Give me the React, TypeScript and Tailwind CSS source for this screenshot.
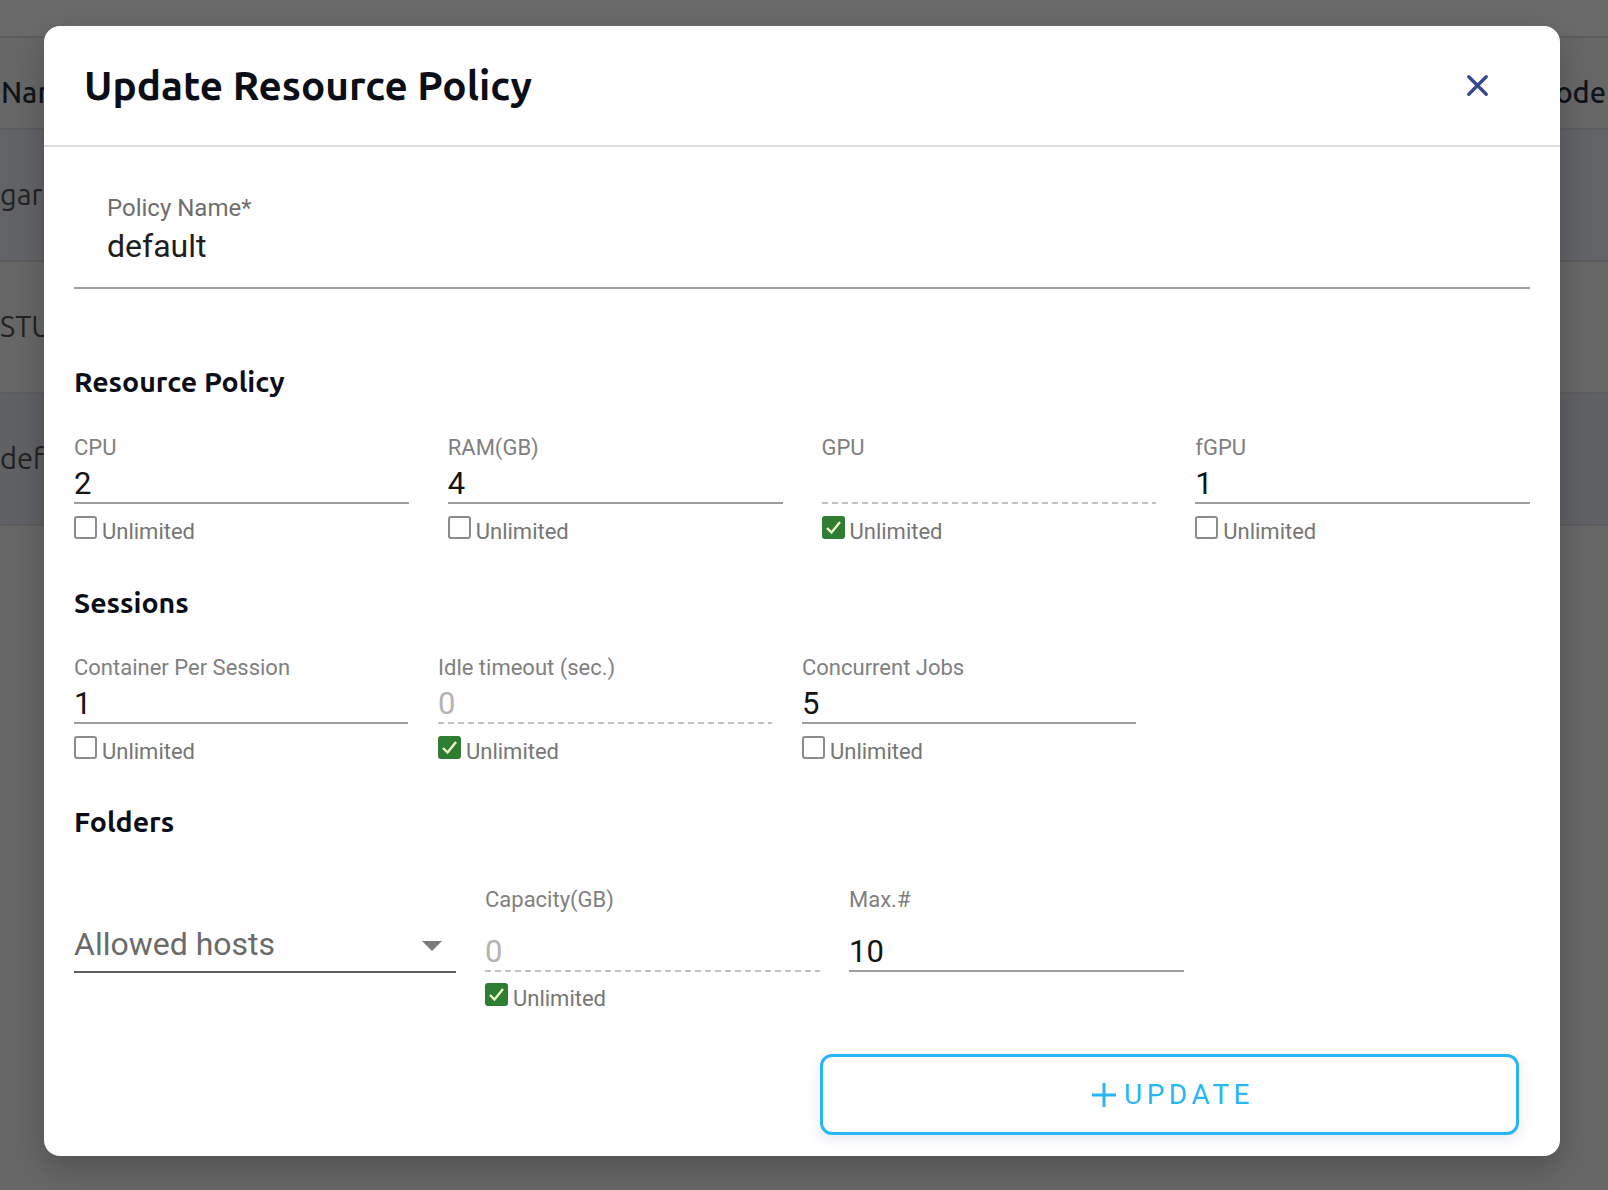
import { X } from 'lucide-react';

// ─── Fields ───────────────────────────────────────────────────────────────────

type Field = { label: string; value: string; unlimited: boolean };

const resourceFields: Field[] = [
  { label: 'CPU', value: '2', unlimited: false },
  { label: 'RAM(GB)', value: '4', unlimited: false },
  { label: 'GPU', value: '', unlimited: true },
  { label: 'fGPU', value: '1', unlimited: false },
];

const sessionFields: Field[] = [
  { label: 'Container Per Session', value: '1', unlimited: false },
  { label: 'Idle timeout (sec.)', value: '0', unlimited: true },
  { label: 'Concurrent Jobs', value: '5', unlimited: false },
];

const rows = [
  { name: 'gardener', bg: 'bg-[#626366]' },
  { name: 'STUDENT', bg: 'bg-[#676767]' },
  { name: 'default', bg: 'bg-[#606164]' },
];

export default function App() {
  return (
    <div className="relative h-[1190px] w-[1608px] overflow-hidden bg-[#676767] font-['Ubuntu','Lato',sans-serif]">
      {/* Backdrop table */}
      <div className="h-[38px] border-b-2 border-[#5d5d5d] bg-[#6a6a6a]" />
      <div className="flex h-[92px] items-center justify-between border-b-2 border-[#5d5d5d] pl-[1px] pr-[2px] pt-[19px] text-[29px] font-medium text-[#11131c]">
        <span>Name</span>
        <span>Mode</span>
      </div>
      {rows.map((r) => (
        <div
          key={r.name}
          className={`flex h-[132px] items-center border-b-2 border-[#5d5d5d] text-[29px] text-[#222] ${r.bg}`}
        >
          <span>{r.name}</span>
        </div>
      ))}

      {/* Dialog */}
      <div className="absolute left-[44px] top-[26px] flex h-[1130px] w-[1516px] flex-col rounded-[16px] bg-white shadow-[0_12px_32px_rgba(0,0,0,0.22)]">
        <header className="flex h-[121px] shrink-0 items-center justify-between border-b-2 border-[#dedede] pl-[40px] pr-[65px]">
          <h1 className="text-[40.5px] font-bold leading-none text-[#0b0d17]">Update Resource Policy</h1>
          <button aria-label="Close" className="text-[#34498f]">
            <X className="h-[35px] w-[35px]" strokeWidth={2.3} />
          </button>
        </header>

        <div className="flex flex-col px-[30px] font-['Roboto',sans-serif]">
          {/* Policy name */}
          <div className="mt-[48px] border-b-2 border-[#9e9e9e] pb-[22px] pl-[33px]">
            <div className="h-[26px] text-[24px] leading-[26px] text-[#6e6e6e]">Policy Name*</div>
            <div className="mt-[6px] h-[38px] text-[32px] leading-[38px] text-[#1e1e1e]">default</div>
          </div>

          <SectionTitle className="mt-[74px]">Resource Policy</SectionTitle>
          <div className="mt-[37px] grid grid-cols-4 gap-x-[39px]">
            {resourceFields.map((f) => (
              <NumberField key={f.label} field={f} />
            ))}
          </div>

          <SectionTitle className="mt-[44px]">Sessions</SectionTitle>
          <div className="mt-[36px] grid grid-cols-[334px_334px_334px] gap-x-[30px]">
            {sessionFields.map((f) => (
              <NumberField key={f.label} field={f} />
            ))}
          </div>

          <SectionTitle className="mt-[43px]">Folders</SectionTitle>
          <div className="mt-[49px] grid grid-cols-[382px_335px_335px] items-start gap-x-[29px]">
            {/* Allowed hosts select */}
            <div className="mt-[34px] flex h-[51px] items-start justify-between border-b-2 border-[#5f5f5f] pr-[14px]">
              <span className="text-[32px] leading-[44px] text-[#6a6a6a]">Allowed hosts</span>
              <svg width="20" height="10" viewBox="0 0 20 10" className="mt-[19px]">
                <path d="M0 0 L20 0 L10 10 Z" fill="#7a7a7a" />
              </svg>
            </div>
            <div>
              <div className="h-[24px] text-[22px] leading-[24px] text-[#808080]">Capacity(GB)</div>
              <div className="mt-[22px] h-[36px] text-[31px] leading-[36px] text-[#b3b3b3]">0</div>
              <Dashed />
              <div className="mt-[11px]">
                <Unlimited checked />
              </div>
            </div>
            <div>
              <div className="h-[24px] text-[22px] leading-[24px] text-[#808080]">Max.#</div>
              <div className="mt-[22px] h-[36px] text-[31px] leading-[36px] text-[#141414]">10</div>
              <div className="h-[2px] bg-[#9e9e9e]" />
            </div>
          </div>

          {/* Action */}
          <div className="mt-[47px] flex justify-end pr-[11px]">
            <button className="flex h-[81px] w-[699px] items-center justify-center gap-[7px] rounded-[12px] border-[3px] border-[#29b6f6] bg-white pl-[6px] text-[#29b6f6] shadow-[0_4px_14px_rgba(40,60,120,0.12)]">
              <svg width="26" height="26" viewBox="0 0 26 26">
                <path d="M13 1 V25 M1 13 H25" stroke="#29b6f6" strokeWidth="3" />
              </svg>
              <span className="text-[28px] leading-none tracking-[4.5px]">UPDATE</span>
            </button>
          </div>
        </div>
      </div>
    </div>
  );
}

// ─── Sub-components ───────────────────────────────────────────────────────────

function SectionTitle({ children, className }: { children: string; className: string }) {
  return (
    <h2 className={`h-[36px] font-['Ubuntu','Lato',sans-serif] text-[28.5px] font-bold leading-[36px] text-[#0b0d17] ${className}`}>
      {children}
    </h2>
  );
}

function NumberField({ field }: { field: Field }) {
  return (
    <div>
      <div className="h-[24px] text-[22px] leading-[24px] text-[#808080]">{field.label}</div>
      <div
        className={`mt-[6px] h-[36px] text-[31px] leading-[36px] ${
          field.unlimited ? 'text-[#b3b3b3]' : 'text-[#141414]'
        }`}
      >
        {field.value}
      </div>
      {field.unlimited ? <Dashed /> : <div className="h-[2px] bg-[#9e9e9e]" />}
      <div className="mt-[12px]">
        <Unlimited checked={field.unlimited} />
      </div>
    </div>
  );
}

function Dashed() {
  return (
    <div className="h-[2px] bg-[repeating-linear-gradient(90deg,#c2c2c2_0_6px,transparent_6px_10px)]" />
  );
}

function Unlimited({ checked = false }: { checked?: boolean }) {
  return (
    <label className="flex h-[24px] items-start gap-[5px]">
      {checked ? (
        <span className="flex h-[23px] w-[23px] items-center justify-center rounded-[3px] bg-[#2e7d32]">
          <svg width="19" height="19" viewBox="0 0 19 19">
            <path d="M3 10 L7.5 14.5 L16 4" fill="none" stroke="#eef5c4" strokeWidth="2.4" />
          </svg>
        </span>
      ) : (
        <span className="h-[23px] w-[23px] rounded-[3px] border-2 border-[#8c8c8c]" />
      )}
      <span className="pt-[4px] text-[22px] leading-[24px] text-[#767676]">Unlimited</span>
    </label>
  );
}
